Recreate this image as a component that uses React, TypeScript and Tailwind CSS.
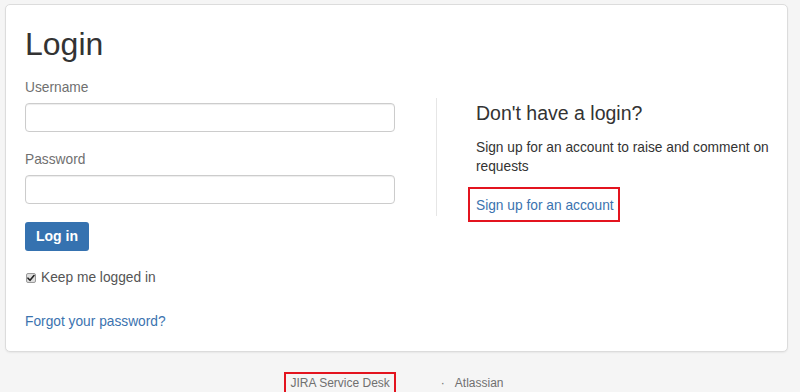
import React from 'react';

const font = { fontFamily: '"Liberation Sans", Arial, sans-serif' };

function CheckMark() {
  return (
    <span className="flex h-[10px] w-[10px] items-center justify-center rounded-[2px] border border-[#9a9a9a] bg-[#dedede]">
      <svg width="8" height="8" viewBox="0 0 8 8">
        <path d="M1 4.2 L3 6.3 L7 1.5" fill="none" stroke="#222" strokeWidth="1.6" strokeLinecap="round" strokeLinejoin="round" />
      </svg>
    </span>
  );
}

export default function App() {
  return (
    <div className="h-[392px] w-[800px] overflow-hidden bg-[#f5f5f5] pt-[4px]" style={font}>
      <div className="ml-[5px] w-[783px] rounded-[5px] border border-[#dcdcdc] bg-white px-[19px] pt-[19px] pb-[19px] shadow-[0_1px_2px_rgba(0,0,0,0.06)]">
        <h1 className="text-[32px] leading-[40px] font-normal text-[#333]">Login</h1>

        <div className="mt-[14px] flex">
          {/* login form */}
          <div className="w-[370px] shrink-0">
            <label className="block text-[13.75px] leading-[20px] text-[#707070]">Username</label>
            <input className="mt-[5px] block h-[29px] w-full rounded-[4px] border border-[#cccccc] bg-white shadow-[inset_0_1px_1px_rgba(0,0,0,0.075)] outline-none" />

            <label className="mt-[18px] block text-[13.75px] leading-[20px] text-[#707070]">Password</label>
            <input type="password" className="mt-[5px] block h-[29px] w-full rounded-[4px] border border-[#cccccc] bg-white shadow-[inset_0_1px_1px_rgba(0,0,0,0.075)] outline-none" />

            <button className="mt-[18px] block h-[29px] rounded-[3px] bg-[#3572b0] px-[11px] text-[14px] font-bold text-white">
              Log in
            </button>

            <div className="mt-[17px] flex h-[20px] items-center">
              <span className="ml-[1px]"><CheckMark /></span>
              <span className="ml-[5px] text-[13.75px] leading-[20px] text-[#555]">Keep me logged in</span>
            </div>

            <a className="mt-[24px] block text-[13.75px] leading-[20px] text-[#3b73af]">Forgot your password?</a>
          </div>

          {/* sign up */}
          <div className="mt-[20px] ml-[41px] w-[330px] shrink-0 self-start border-l border-[#e6e6e6] pt-[2.5px] pl-[39px]">
            <h2 className="text-[19.5px] leading-[24px] font-normal text-[#333]">Don't have a login?</h2>
            <p className="mt-[13px] w-[300px] text-[13.75px] leading-[19px] text-[#333]">
              Sign up for an account to raise and comment on requests
            </p>
            <div className="mt-[20px] flex">
              <a className="relative block text-[13.75px] leading-[20px] text-[#3b73af]">
                Sign up for an account
                <span className="absolute -top-[8.5px] -right-[6px] -bottom-[6.5px] -left-[8px] border-2 border-[#e3141f]" />
              </a>
            </div>
          </div>
        </div>
      </div>

      <div className="mt-[20px] ml-[5px] flex w-[783px] items-start justify-center pr-[5px] text-[12px] text-[#707070]">
        <span className="border-2 border-[#e3141f] px-[4px] py-[1px] leading-[16px]">JIRA Service Desk</span>
        <span className="ml-[45px] pt-[3px] leading-[16px]">·</span>
        <span className="ml-[10px] pt-[3px] leading-[16px]">Atlassian</span>
      </div>
    </div>
  );
}
